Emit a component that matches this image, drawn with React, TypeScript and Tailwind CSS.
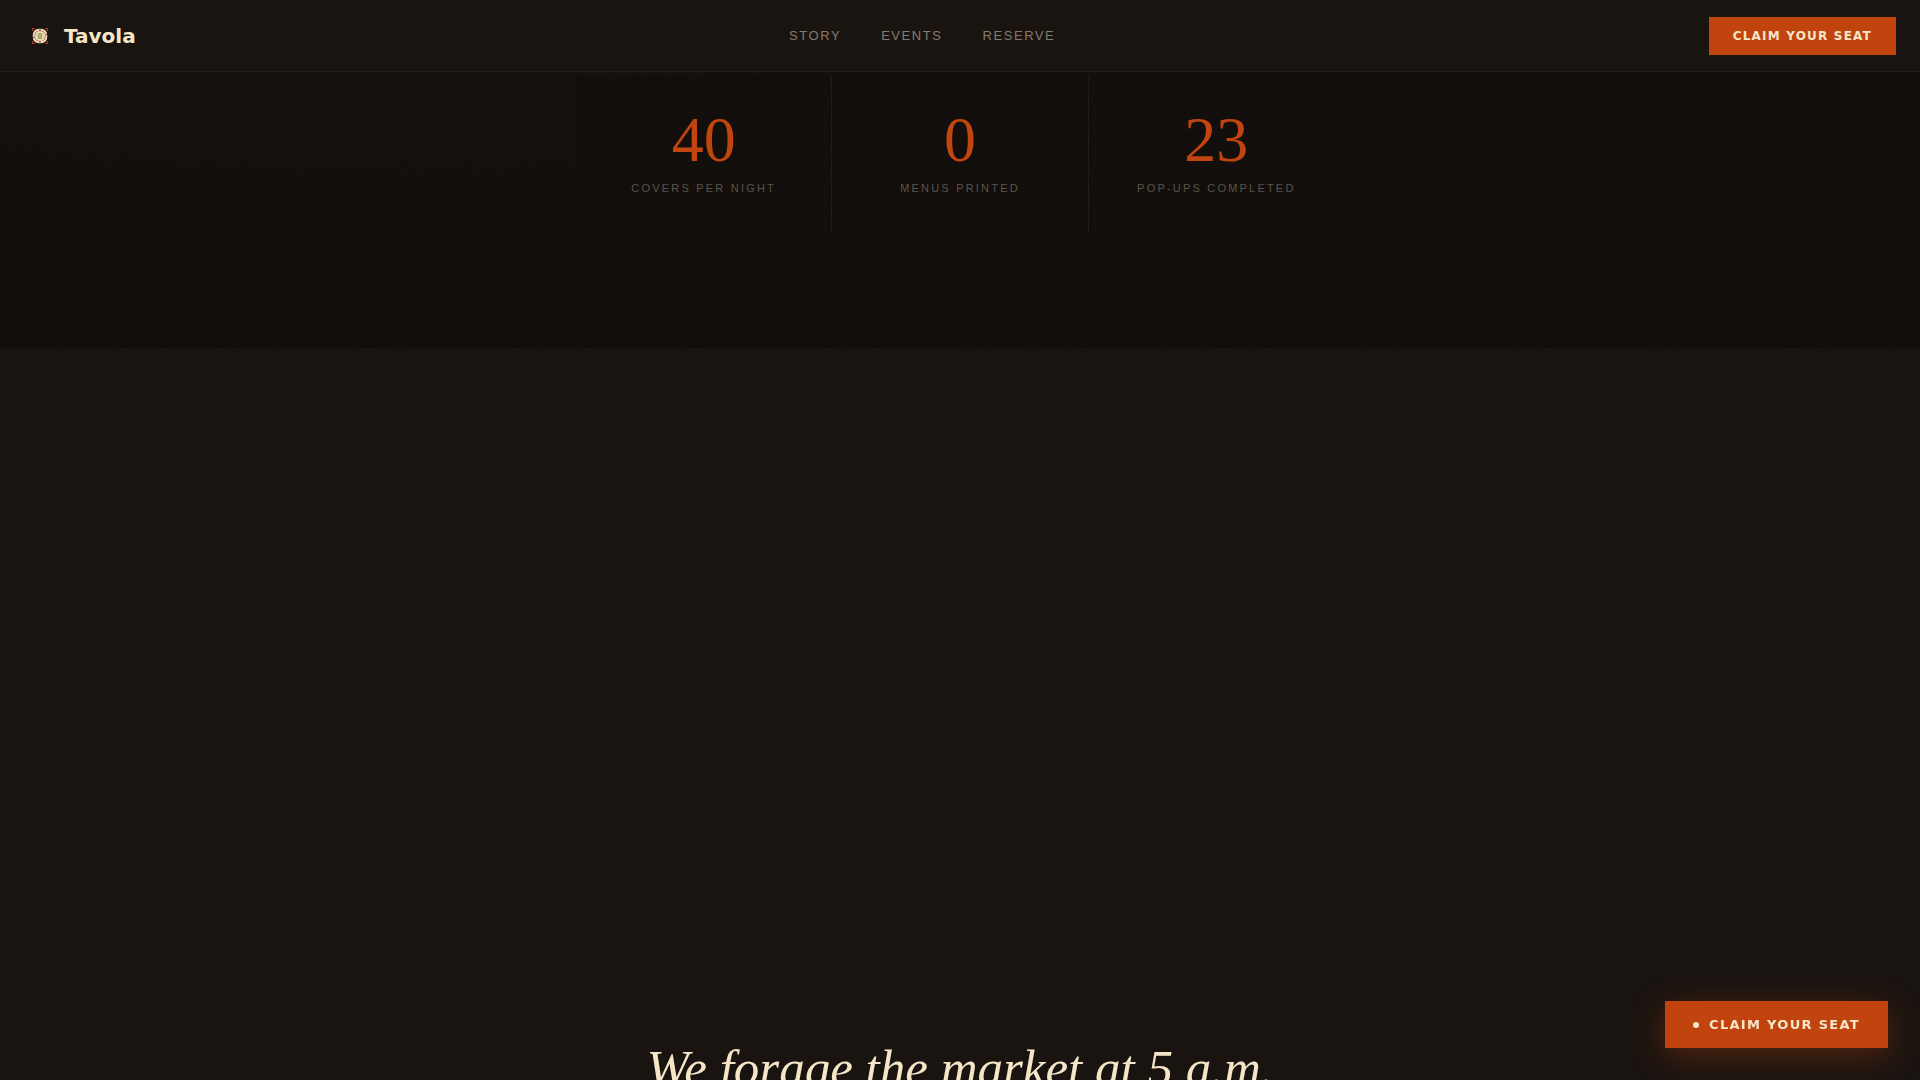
const NAV_LINKS = [
  { label: 'Story', href: '#story' },
  { label: 'Events', href: '#events' },
  { label: 'Reserve', href: '#reserve' },
];

const STATS = [
  { value: '40', label: 'Covers per night' },
  { value: '0', label: 'Menus printed' },
  { value: '23', label: 'Pop-ups completed' },
];

function LogoMark() {
  return (
    <svg className="w-4 h-4" viewBox="0 0 16 16" fill="none" aria-hidden="true">
      {/* Corner ticks */}
      <path d="M0 0h3.4L0 3.4zM16 0v3.4L12.6 0zM16 16h-3.4l3.4-3.4zM0 16v-3.4L3.4 16z" fill="#8f3a1c" />
      {/* Plate */}
      <rect x="0.8" y="0.8" width="14.4" height="14.4" rx="6" fill="#f0dcc0" />
      <rect x="2.9" y="2.9" width="10.2" height="10.2" rx="4" stroke="#bd7a58" strokeWidth="0.9" strokeDasharray="7 1.5" />
      <path d="M8 0.5v2.2M8 13.3v2.2M0.8 9.8l2-.5M13.2 6.7l2-.5" stroke="#3a2118" strokeWidth="0.8" />
      <rect x="4.4" y="4.4" width="7.2" height="7.2" rx="2.2" fill="#ecd6ae" />
      <rect x="5.8" y="5.2" width="4.4" height="5.6" rx="1" fill="#93a068" />
      <path d="M7.2 6.2v3.6M8.8 6.2v3.6" stroke="#e0cf9e" strokeWidth="0.6" />
    </svg>
  );
}

function Header() {
  return (
    <header className="fixed inset-x-0 top-0 z-40 flex h-18 items-center justify-between border-b border-[#26221b] bg-[#1a1410] px-6">
      <a href="#top" className="flex items-center gap-2">
        <span className="flex w-8 h-8 items-center justify-center">
          <LogoMark />
        </span>
        <span className="font-['DejaVu_Sans',sans-serif] text-xl font-bold text-[#f5e6c8]">Tavola</span>
      </a>
      <nav className="flex items-center gap-10">
        {NAV_LINKS.map((link) => (
          <a
            key={link.href}
            href={link.href}
            className="text-[13px] tracking-[0.12em] uppercase text-[#857b6d] hover:text-[#f5e6c8] transition-colors"
          >
            {link.label}
          </a>
        ))}
      </nav>
      <button className="bg-[#c1440e] px-6 py-3 font-['DejaVu_Sans',sans-serif] text-xs leading-[14px] font-bold tracking-widest uppercase text-[#f5e6c8] hover:bg-[#d4551f] transition-colors">
        Claim your seat
      </button>
    </header>
  );
}

function Stats() {
  return (
    <section className="relative overflow-hidden bg-[#110d0a] pt-19 pb-29">
      {/* Warm glow behind the left column */}
      <div className="absolute inset-0 bg-[radial-gradient(ellipse_at_20%_0%,#16100b,transparent_50%)]" />
      <div className="relative mx-auto grid max-w-3xl grid-cols-3 gap-px bg-[#1e1a15]">
        {STATS.map((stat) => (
          <div key={stat.label} className="flex flex-col items-center gap-2 bg-[#110d0a] px-8 pt-8 pb-9">
            <span className="font-['Liberation_Serif',serif] text-[64px] leading-16 text-[#c1440e]">{stat.value}</span>
            <span className="text-[11px] leading-4 tracking-[0.2em] uppercase text-[#59534a]">{stat.label}</span>
          </div>
        ))}
      </div>
      {/* Film grain */}
      <svg className="pointer-events-none absolute inset-0 w-full h-full opacity-[0.02]" aria-hidden="true">
        <filter id="grain">
          <feTurbulence type="fractalNoise" baseFrequency="0.9" numOctaves="4" stitchTiles="stitch" />
        </filter>
        <rect width="100%" height="100%" filter="url(#grain)" />
      </svg>
    </section>
  );
}

export default function App() {
  return (
    <div id="top" className="h-screen overflow-hidden bg-[#1a1410] font-['Liberation_Sans',sans-serif]">
      <Header />
      <main>
        <Stats />
        <section id="story" className="px-6 pt-172">
          <h2 className="text-center font-['Liberation_Serif',serif] text-[51px] leading-16 italic text-[#f5e6c8]">
            We forage the market at 5 a.m.
          </h2>
        </section>
      </main>
      <button className="fixed right-8 bottom-8 z-50 flex items-center gap-2.5 bg-[#c1440e] px-7 py-4 font-['DejaVu_Sans',sans-serif] text-[13px] leading-[15px] font-bold tracking-widest uppercase text-[#f5e6c8] shadow-[0_8px_32px_rgba(193,68,14,0.35)] hover:bg-[#d4551f] transition-colors">
        <span className="w-1.5 h-1.5 rounded-full bg-[#f5e6c8]" />
        Claim your seat
      </button>
    </div>
  );
}
